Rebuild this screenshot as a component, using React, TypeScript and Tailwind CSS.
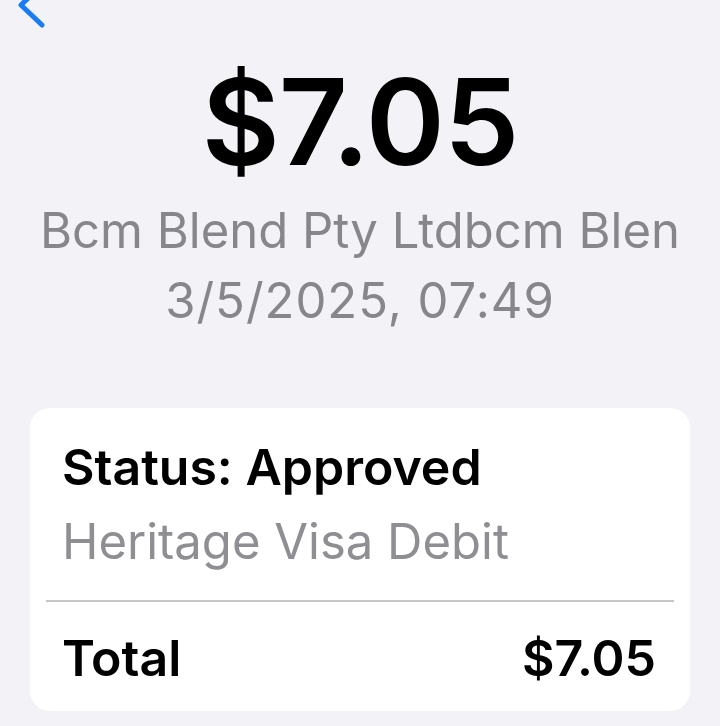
import React from "react";

export default function App() {
  return (
    <div
      className="w-[720px] h-[726px] bg-[#f2f2f7] overflow-hidden flex flex-col"
      style={{ fontFamily: "Inter, 'Noto Sans', sans-serif" }}
    >
      <div className="h-[30px] relative shrink-0">
        <svg
          className="absolute left-0 top-[-20px]"
          width="50"
          height="50"
          viewBox="0 0 50 50"
          fill="none"
        >
          <path
            d="M42 5 L21 25 L42 45"
            stroke="#1a7cf5"
            strokeWidth="5"
            strokeLinecap="round"
            strokeLinejoin="round"
          />
        </svg>
      </div>
      <div className="flex flex-col items-center">
        <div className="text-[120px] leading-[140px] font-semibold text-black tracking-[-1px] mt-[22px]">
          $7.05
        </div>
        <div className="text-[49px] leading-[58px] text-[#86868b] mt-[10px]">
          Bcm Blend Pty Ltdbcm Blen
        </div>
        <div className="text-[49px] leading-[58px] text-[#86868b] mt-[12px] tracking-[1px]">
          3/5/2025, 07:49
        </div>
      </div>
      <div className="mx-[30px] mt-[78px] bg-white rounded-[20px] pl-[32px] pr-[34px] pt-[24px] pb-[18px]">
        <div className="text-[50px] leading-[70px] font-semibold text-black">
          Status: Approved
        </div>
        <div className="text-[49px] leading-[70px] text-[#8e8e93] mt-[5px]">
          Heritage Visa Debit
        </div>
        <div className="h-[2px] bg-[#c6c6c8] mt-[23px] -ml-[16px] -mr-[18px]" />
        <div className="flex justify-between items-center mt-[21px]">
          <span className="text-[50px] leading-[70px] font-semibold text-black">Total</span>
          <span className="text-[50px] leading-[70px] font-semibold text-black">$7.05</span>
        </div>
      </div>
    </div>
  );
}
